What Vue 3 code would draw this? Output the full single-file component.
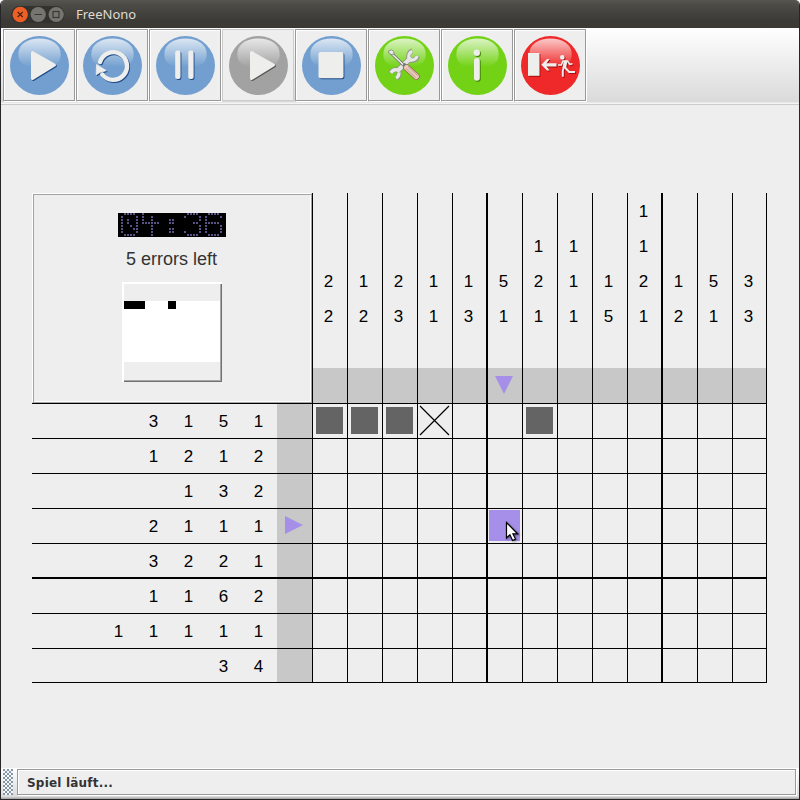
<script setup>
const buttons = [
  { name: 'play', tone: 'blue' },
  { name: 'restart', tone: 'blue' },
  { name: 'pause', tone: 'blue' },
  { name: 'play', tone: 'grey', disabled: true },
  { name: 'stop', tone: 'blue' },
  { name: 'tools', tone: 'green' },
  { name: 'info', tone: 'green' },
  { name: 'exit', tone: 'red' },
]
const fills = { blue: '#729fcf', grey: '#a2a2a2', green: '#73d216', red: '#ef2929' }
const shades = { blue: '#204a87', grey: '#555753', green: '#3f7f0a', red: '#a01010' }

const led = [
  '..####..#..............####...####..',
  '.#....#.#..#..........#....#.#....#.',
  '.#.#..#.#..#.....##........#.#......',
  '.#.#..#.######...##......##..#####..',
  '.#..#.#....#...............#.#....#.',
  '.#...##....#.....##........#.#....#.',
  '.#....#....#.....##...#....#.#....#.',
  '..####.....#...........####...####..',
]
const dots = led.flatMap((line, y) => [...line].flatMap((c, x) => (c === '#' ? [{ x: x * 3, y: y * 3 }] : [])))

const columns = [
  [2, 2], [1, 2], [2, 3], [1, 1], [1, 3], [5, 1], [1, 2, 1],
  [1, 1, 1], [1, 5], [1, 1, 2, 1], [1, 2], [5, 1], [3, 3],
].map((c) => [...Array(4 - c.length).fill(''), ...c, ''])
const rows = [
  [3, 1, 5, 1], [1, 2, 1, 2], [1, 3, 2], [2, 1, 1, 1],
  [3, 2, 2, 1], [1, 1, 6, 2], [1, 1, 1, 1, 1], [3, 4],
]
const marks = ['###x..#......', '', '', '.....@.......']
const mark = (r, c) => (marks[r] || '')[c]
const activeCol = 5
const activeRow = 3
</script>

<template>
  <div class="window">
    <header class="titlebar">
      <div class="controls">
        <svg width="54" height="18" viewBox="0 0 54 18">
          <rect width="53.500" height="17" rx="8.5" fill="#33322e" />
          <circle cx="9.2" cy="8.5" r="7.7" fill="#ee5f26" />
          <path d="M6.700 6l5 5M11.700 6l-5 5" stroke="#4b2413" stroke-width="1.3" />
          <circle cx="27.2" cy="8.5" r="7.6" fill="#777570" />
          <path d="M23.500 8.5h7.500" stroke="#3a3935" stroke-width="1.2" />
          <circle cx="45.2" cy="8.5" r="7.6" fill="#777570" />
          <rect x="42" y="5.5" width="6" height="6" fill="none" stroke="#3a3935" stroke-width="1.2" />
        </svg>
      </div>
      <span class="title">FreeNono</span>
    </header>

    <nav class="toolbar">
      <button v-for="(b, i) in buttons" :key="i" class="tool" :class="{ off: b.disabled }">
        <svg width="60" height="60" viewBox="0 0 60 60">
          <defs>
            <linearGradient :id="'gloss' + i" x1="0" y1="0" x2="0" y2="1">
              <stop offset="0" stop-color="#fff" stop-opacity=".75" />
              <stop offset="1" stop-color="#fff" stop-opacity="0" />
            </linearGradient>
          </defs>
          <circle cx="29.5" cy="29.5" r="29.5" :fill="fills[b.tone]" />
          <path d="M8.3 18C8.3 8 18 2.5 29.5 2.5S50.7 8 50.7 18 44 31 29.5 31 8.3 28 8.3 18z" :fill="`url(#gloss${i})`" />
          <g
            v-for="layer in 2"
            :key="layer"
            :transform="layer === 1 ? 'translate(.9 1)' : ''"
            :fill="layer === 1 ? shades[b.tone] : '#eeeeec'"
            :stroke="layer === 1 ? shades[b.tone] : '#eeeeec'"
            stroke-width="0"
          >
            <path v-if="b.name === 'play'" d="M22.5 16.5L44.500 29 22.500 42.500z" stroke-width="3" stroke-linejoin="round" />
            <template v-else-if="b.name === 'restart'">
              <path d="M17 26A13.800 13.800 0 1 1 19.300 38.500" fill="none" stroke-width="4.400" stroke-linecap="round" />
              <path d="M13.500 28.500L23.300 34.600 19.500 35.800 17.500 36.200 13.200 38.700z" stroke-width=".8" stroke-linejoin="round" />
            </template>
            <template v-else-if="b.name === 'pause'">
              <rect x="19.200" y="14.500" width="5.300" height="28.500" rx="2" />
              <rect x="32.300" y="14.500" width="5.300" height="28.500" rx="2" />
            </template>
            <rect v-else-if="b.name === 'stop'" x="16.500" y="16" width="25" height="26.300" rx="2" />
            <template v-else-if="b.name === 'info'">
              <circle cx="28.800" cy="16.700" r="3.200" />
              <rect x="26" y="22" width="5.800" height="22.800" rx="2.800" />
            </template>
            <template v-else-if="b.name === 'exit'">
              <rect x="7" y="17" width="11.500" height="22.800" />
              <path d="M20.300 28.700L26 23h2.700l-3.200 4.200h10v3.200h-10l3.200 4.200H26z" />
              <circle cx="41.300" cy="21.400" r="2.300" />
              <path d="M37 29h3.300l1.700-4h4.500l2.300 3.300 2.700-.6" fill="none" stroke-width="1.600" />
              <path d="M42.800 24.800h3.700l-1.500 7.400h-3.600z" />
              <path d="M44 31.500l4.200 4.500H54" fill="none" stroke-width="1.900" />
              <path d="M42.800 31.500l-1 3.200v6" fill="none" stroke-width="1.900" />
            </template>
          </g>
          <g v-if="b.name === 'tools'">
            <g fill="none" stroke-linecap="butt">
              <path d="M22 35.500L36 21.500" stroke="#8f918a" stroke-width="6" />
              <path d="M34 22.400A5.900 5.900 0 0 1 37.300 14.800M35.200 24A5.900 5.900 0 0 0 42.600 20M22.600 34A5.900 5.900 0 0 0 15.500 37M24 36.500A5.900 5.900 0 0 1 21 42.500" stroke="#8f918a" stroke-width="4.800" />
              <path d="M22 35.500L36 21.500" stroke="#e4e4e2" stroke-width="4.400" />
              <path d="M34 22.400A5.900 5.900 0 0 1 37.200 15.200M35.200 24A5.900 5.900 0 0 0 42.200 20.100M22.600 34A5.900 5.900 0 0 0 15.900 36.900M24 36.500A5.900 5.900 0 0 1 21.100 42.100" stroke="#e8e8e6" stroke-width="3.300" />
              <path d="M16 17L29 29.500" stroke="#666" stroke-width="3" />
              <path d="M16 17L29 29.500" stroke="#eee" stroke-width="1.700" />
            </g>
            <path d="M13.500 15l3.200-1.200 2 1.700.4 2.600-2.600.4-2.400-1z" fill="#e8e8e6" stroke="#777" stroke-width=".7" />
            <path d="M31.500 31.500L41.300 40.500" stroke="#8f6a55" stroke-width="6.800" stroke-linecap="round" />
            <path d="M31.500 31.500L41.300 40.500" stroke="#e6cbb8" stroke-width="5.200" stroke-linecap="round" />
            <path d="M31 32.500L40.500 41.500M33 30.500L42.500 39.500" stroke="#b99078" stroke-width=".7" />
            <path d="M28 30l2.500-2.500" stroke="#777" stroke-width="2" />
          </g>
        </svg>
      </button>
    </nav>

    <main class="stage">
      <div class="top">
        <section class="panel">
          <svg class="clock" width="108" height="24" viewBox="0 0 108 24" shape-rendering="crispEdges">
            <rect width="108" height="24" fill="#000" />
            <rect v-for="(d, i) in dots" :key="i" :x="d.x" :y="d.y" width="2" height="2" fill="#5a5286" />
          </svg>
          <p class="errors">5 errors left</p>
          <div class="preview">
            <svg width="96" height="61" shape-rendering="crispEdges">
              <rect width="96" height="61" fill="#fff" />
              <path d="M0 0h21v8H0zM44 0h8v8h-8z" />
            </svg>
          </div>
        </section>
        <div class="col-hints">
          <div v-for="(col, c) in columns" :key="c" class="col" :class="{ heavy: c === 4 || c === 9, last: c === 12 }">
            <span v-for="(n, k) in col" :key="k" class="num">{{ n }}</span>
            <span class="marker">
              <svg v-if="c === activeCol" width="34" height="35"><path d="M7 8h18L16 26z" fill="#a68fe8" /></svg>
            </span>
          </div>
        </div>
      </div>
      <div v-for="(row, r) in rows" :key="r" class="row" :class="{ heavy: r === 4, last: r === 7 }">
        <div class="row-hints">
          <span v-for="(n, k) in row" :key="k" class="num">{{ n }}</span>
        </div>
        <span class="marker side">
          <svg v-if="r === activeRow" width="35" height="33"><path d="M8 7v18L26 16z" fill="#a68fe8" /></svg>
        </span>
        <div v-for="c in 13" :key="c" class="cell" :class="{ heavy: c === 5 || c === 10, last: c === 13 }">
          <i v-if="mark(r, c - 1) === '#'" class="filled"></i>
          <i v-else-if="mark(r, c - 1) === '@'" class="cursor-cell"></i>
          <svg v-else-if="mark(r, c - 1) === 'x'" width="34" height="34">
            <path d="M2 2l29 29M31 2L2 31" stroke="#000" stroke-width="1.200" />
          </svg>
        </div>
      </div>
      <svg class="pointer" width="14" height="22" viewBox="0 0 14 22">
        <path d="M1.500 1.500v15.500l3.400-3.300 2.700 5.800 2.900-1.400-2.600-5.300h4.700z" fill="#fff" stroke="#000" stroke-width="1.200" />
      </svg>
    </main>

    <footer class="status">
      <div class="grip"></div>
      <div class="message">Spiel läuft...</div>
    </footer>
  </div>
</template>

<style>
body { margin: 0; background: #fff; }
</style>

<style scoped>
* { box-sizing: border-box; }
.window {
  width: 800px;
  height: 800px;
  display: flex;
  flex-direction: column;
  background: #eeeeee;
  border: 1px solid #26262a;
  border-top: 0;
  border-radius: 5px 5px 0 0;
  overflow: hidden;
  font-family: "Liberation Sans", Arial, sans-serif;
}
.titlebar {
  flex: none;
  height: 28px;
  display: flex;
  align-items: center;
  gap: 11px;
  padding: 1px 0 0 10px;
  background: linear-gradient(#56554f 0, #4c4b46 5px, #3c3b37 20px, #3a3934 100%);
}
.controls svg { display: block; }
.title {
  margin-top: -2px;
  font: 13px/20px "Noto Sans", sans-serif;
  color: #dfdbd2;
}
.toolbar {
  flex: none;
  height: 77px;
  display: flex;
  gap: 1px;
  padding: 1px 2px;
  background: linear-gradient(#fff 0, #dadada 74px, #f4f4f4 75px, #f4f4f4 76px, #ccc 76px);
}
.tool {
  width: 72px;
  height: 72px;
  padding: 6px;
  border: 1px solid #999;
  background: #eee;
  box-shadow: inset 1px 1px #fff, 1px 1px #fff;
}
.tool.off { border-color: #ccc; box-shadow: none; }
.tool svg { display: block; }
.stage {
  flex: 1;
  position: relative;
  padding: 88px 0 0 31px;
}
.top { display: flex; height: 210px; }
.panel {
  width: 280px;
  height: 210px;
  display: flex;
  flex-direction: column;
  align-items: center;
  padding-top: 18px;
  border: 1px solid;
  border-color: #fff #a3a3a3 #a3a3a3 #fff;
  box-shadow: inset 1px 1px #a3a3a3, inset -1px -1px #fff;
}
.clock { display: block; margin-top: 1px; }
.errors {
  margin: 12px 1px 0 0;
  font-size: 18px;
  line-height: 20px;
  color: #333;
}
.preview {
  width: 100px;
  height: 100px;
  margin-top: 13px;
  padding-top: 17px;
  border: 2px solid #fff;
  border-right: 0;
  border-bottom: 0;
  box-shadow: inset -1px -1px #707070, inset -2px -2px #a8a8a8;
}
.preview svg { display: block; }
.col-hints { display: flex; }
.col {
  width: 35px;
  height: 210px;
  display: flex;
  flex-direction: column;
  border-left: 1px solid #000;
}
.col.heavy, .col.last, .cell.heavy, .cell.last { border-right: 1px solid #000; }
.num {
  display: block;
  flex: none;
  width: 35px;
  height: 35px;
  margin-left: -1px;
  padding-right: 2px;
  text-align: center;
  font-size: 17px;
  line-height: 37px;
  color: #000;
}
.marker { display: block; height: 35px; background: #c8c8c8; }
.marker svg { display: block; }
.row { display: flex; height: 35px; width: 735px; border-top: 1px solid #000; }
.row.heavy, .row.last { border-bottom: 1px solid #000; }
.row-hints {
  width: 245px;
  display: flex;
  justify-content: flex-end;
  overflow: hidden;
}
.row-hints .num { margin-left: 0; line-height: 35px; }
.marker.side { width: 35px; height: auto; }
.cell { width: 35px; border-left: 1px solid #000; }
.cell svg { display: block; }
.filled {
  display: block;
  width: 27px;
  height: 27px;
  margin: 3px;
  background: #646464;
}
.cursor-cell {
  display: block;
  width: 31px;
  height: 31px;
  margin: 1px;
  background: #a68fe8;
}
.pointer { position: absolute; left: 504px; top: 416px; filter: drop-shadow(1px 1px 1px rgba(0, 0, 0, 0.4)); }
.status {
  flex: none;
  height: 31px;
  display: flex;
  gap: 4px;
  padding: 1px 3px 4px 2px;
  background: linear-gradient(#fff, #dadada 29px, #aaa 30px);
}
.grip {
  width: 10px;
  background:
    radial-gradient(circle at 1px 1px, #8796a5 0.8px, transparent 1px) 0 0 / 4px 4px,
    radial-gradient(circle at 1px 1px, #8796a5 0.8px, transparent 1px) 2px 2px / 4px 4px,
    #f4f7fa;
}
.message {
  flex: 1;
  padding-left: 9px;
  border: 1px solid #999;
  background: #eee;
  box-shadow: inset 1px 1px #fff, 1px 1px #fff;
  font: bold 12px/26px "DejaVu Sans", sans-serif;
  letter-spacing: 0.2px;
  color: #333;
}
</style>
